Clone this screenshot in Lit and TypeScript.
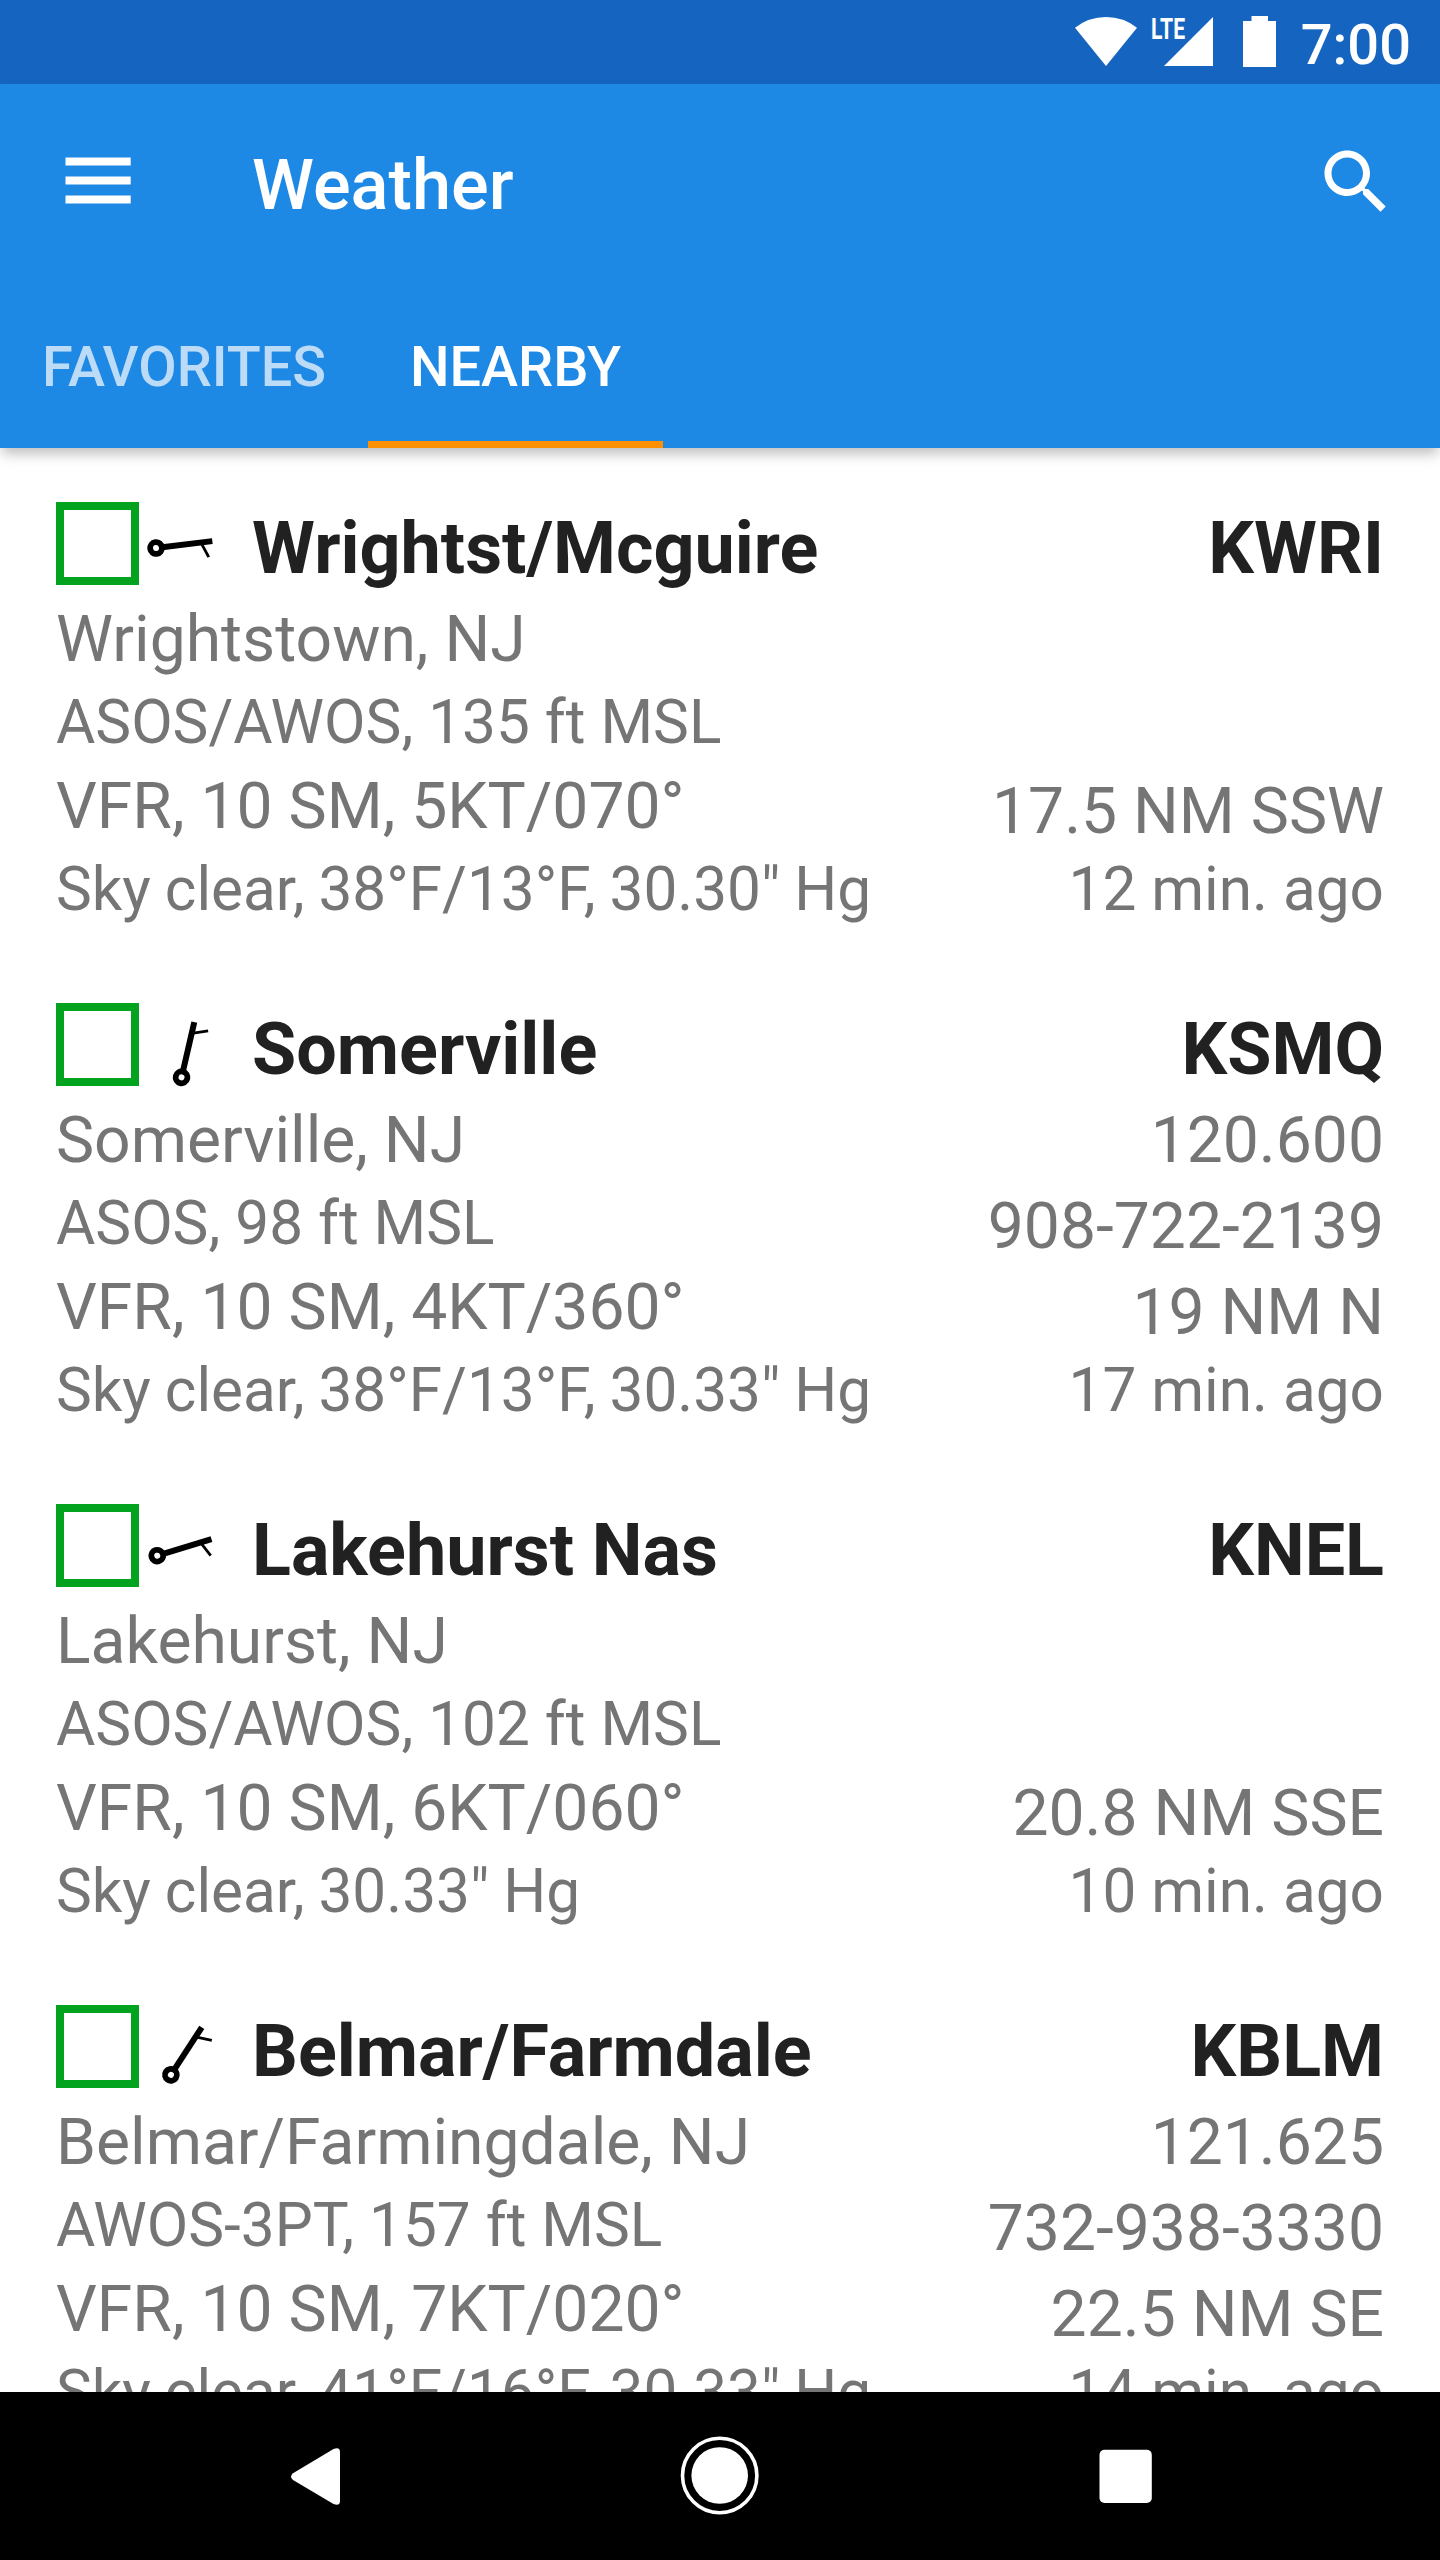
import { LitElement, html, css, svg, nothing } from "lit";
import { customElement, property } from "lit/decorators.js";

interface Station {
  name: string;
  id: string;
  wind: number;
  left: [string, string, string, string];
  freq: string;
  phone: string;
  distance: string;
  age: string;
}

const STATIONS: Station[] = [
  {
    name: "Wrightst/Mcguire",
    id: "KWRI",
    wind: 83,
    left: ["Wrightstown, NJ", "ASOS/AWOS, 135 ft MSL", "VFR, 10 SM, 5KT/070°", 'Sky clear, 38°F/13°F, 30.30" Hg'],
    freq: "",
    phone: "",
    distance: "17.5 NM SSW",
    age: "12 min. ago",
  },
  {
    name: "Somerville",
    id: "KSMQ",
    wind: 13,
    left: ["Somerville, NJ", "ASOS, 98 ft MSL", "VFR, 10 SM, 4KT/360°", 'Sky clear, 38°F/13°F, 30.33" Hg'],
    freq: "120.600",
    phone: "908-722-2139",
    distance: "19 NM N",
    age: "17 min. ago",
  },
  {
    name: "Lakehurst Nas",
    id: "KNEL",
    wind: 73,
    left: ["Lakehurst, NJ", "ASOS/AWOS, 102 ft MSL", "VFR, 10 SM, 6KT/060°", 'Sky clear, 30.33" Hg'],
    freq: "",
    phone: "",
    distance: "20.8 NM SSE",
    age: "10 min. ago",
  },
  {
    name: "Belmar/Farmdale",
    id: "KBLM",
    wind: 33,
    left: ["Belmar/Farmingdale, NJ", "AWOS-3PT, 157 ft MSL", "VFR, 10 SM, 7KT/020°", 'Sky clear, 41°F/16°F, 30.33" Hg'],
    freq: "121.625",
    phone: "732-938-3330",
    distance: "22.5 NM SE",
    age: "14 min. ago",
  },
];

@customElement("station-row")
class StationRow extends LitElement {
  @property({ attribute: false }) station!: Station;

  static styles = css`
    :host {
      display: block;
      height: 501px;
      flex: none;
      color: #757575;
      white-space: nowrap;
    }
    .head {
      display: flex;
      height: 92px;
      line-height: 94px;
      font-size: 71.9px;
      font-weight: 700;
      color: #212121;
    }
    .category {
      box-sizing: border-box;
      width: 83px;
      height: 83px;
      border: 8px solid #03a31f;
      flex: none;
    }
    .barb {
      width: 84px;
      height: 84px;
      margin: 0 21px 0 8px;
      flex: none;
      overflow: visible;
    }
    .name {
      flex: 1;
    }
    .body {
      display: flex;
      justify-content: space-between;
    }
    .col {
      display: flex;
      flex-direction: column;
    }
    .right {
      text-align: right;
    }
    .big {
      font-size: 64.2px;
      height: 90px;
      line-height: 90px;
    }
    .small {
      font-size: 60.3px;
      height: 77px;
      line-height: 77px;
    }
    .sky {
      word-spacing: -1px;
    }
    .phone {
      height: 82px;
      line-height: 82px;
    }
    .age {
      height: 67px;
      line-height: 67px;
    }
  `;

  render() {
    const s = this.station;
    const rows = ["big", "small", "big", "small sky"];
    return html`
      <div class="head">
        <div class="category"></div>
        <svg class="barb" viewBox="-42 -42 84 84">
          <g transform="rotate(${s.wind})" fill="none" stroke="#000">
            <circle cx="0" cy="33.2" r="5.9" stroke-width="5.8" />
            <path d="M0 27V-23.5" stroke-width="6" />
            <path d="M0 -12L15.5 -18" stroke-width="2.8" />
          </g>
        </svg>
        <div class="name">${s.name}</div>
        <div>${s.id}</div>
      </div>
      <div class="body">
        <div class="col">
          ${s.left.map((t, i) => html`<div class=${rows[i]}>${t}</div>`)}
        </div>
        <div class="col right">
          <div class="big">${s.freq || nothing}</div>
          <div class="big phone">${s.phone || nothing}</div>
          <div class="big">${s.distance}</div>
          <div class="small age">${s.age}</div>
        </div>
      </div>
    `;
  }
}

@customElement("app-root")
class AppRoot extends LitElement {
  static styles = css`
    :host {
      display: flex;
      flex-direction: column;
      width: 1440px;
      height: 2560px;
      overflow: hidden;
      background: #fff;
      font-family: Roboto, sans-serif;
    }
    .status {
      display: flex;
      justify-content: flex-end;
      height: 84px;
      flex: none;
      background: #1565c0;
      color: #fff;
      padding-right: 29px;
    }
    .status svg {
      width: 220px;
      height: 84px;
      flex: none;
    }
    .lte {
      font: 700 29.5px Roboto, sans-serif;
    }
    .time {
      width: 121px;
      text-align: right;
      font-size: 56px;
      font-weight: 500;
      line-height: 91px;
      white-space: nowrap;
    }
    .header {
      flex: none;
      height: 364px;
      display: flex;
      flex-direction: column;
      background: #1e88e5;
      color: #fff;
      box-shadow: 0 8px 12px -2px rgba(0, 0, 0, 0.25);
      z-index: 1;
    }
    .bar {
      display: flex;
      height: 196px;
      align-items: center;
      padding: 0 42px 0 56px;
    }
    .menu {
      width: 84px;
      height: 84px;
      margin-right: 112px;
    }
    .title {
      flex: 1;
      font-size: 70.4px;
      font-weight: 500;
      line-height: 84px;
      padding-top: 6px;
    }
    .search {
      width: 84px;
      height: 84px;
    }
    .tabs {
      display: flex;
      height: 168px;
    }
    .tab {
      box-sizing: border-box;
      height: 168px;
      padding: 0 42px;
      font-size: 55.8px;
      font-weight: 500;
      line-height: 175px;
      color: rgba(255, 255, 255, 0.7);
    }
    .first {
      width: 368px;
    }
    .active {
      width: 295px;
      color: #fff;
      border-bottom: 7px solid #ff9100;
    }
    .list {
      flex: 1;
      min-height: 0;
      overflow: hidden;
      display: flex;
      flex-direction: column;
      padding: 54px 56px 0;
    }
    .nav {
      flex: none;
      height: 168px;
      background: #000;
    }
    .nav svg {
      display: block;
      width: 1440px;
      height: 168px;
    }
  `;

  render() {
    return html`
      <div class="status">
        <svg viewBox="1070 0 220 84" fill="#fff">
          <path d="M1106 66L1075 27.8Q1088.5 17 1106 17T1137 27.8Z" />
          <path d="M1213 17V66H1164Z" />
          ${svg`<text class="lte" x="1151" y="39" textLength="34" lengthAdjust="spacingAndGlyphs">LTE</text>`}
          <path d="M1251.5 16H1268V21H1276V67H1243V21H1251.5Z" />
        </svg>
        <div class="time">7:00</div>
      </div>
      <div class="header">
        <div class="bar">
          <svg class="menu" viewBox="56 140 84 84" fill="#fff">
            <path d="M65.5 157.4h65.2v8h-65.2zM65.5 176.4h65.2v8h-65.2zM65.5 195.4h65.2v8h-65.2z" />
          </svg>
          <div class="title">Weather</div>
          <svg class="search" viewBox="0 0 24 24" fill="#fff">
            <path
              d="M15.5 14h-.79l-.28-.27C15.41 12.59 16 11.11 16 9.5 16 5.91 13.09 3 9.5 3S3 5.91 3 9.5 5.91 16 9.5 16c1.61 0 3.09-.59 4.23-1.57l.27.28v.79l5 4.99L20.49 19l-4.99-5zm-6 0C7.01 14 5 11.99 5 9.5S7.01 5 9.5 5 14 7.01 14 9.5 11.99 14 9.5 14z"
            />
          </svg>
        </div>
        <div class="tabs">
          <div class="tab first">FAVORITES</div>
          <div class="tab active">NEARBY</div>
        </div>
      </div>
      <div class="list">${STATIONS.map((s) => html`<station-row .station=${s}></station-row>`)}</div>
      <div class="nav">
        <svg viewBox="0 2392 1440 168" fill="#fff">
          <path d="M333.5 2449Q340 2446.5 340 2452V2501Q340 2506.5 333.5 2504L293 2480Q289 2476.6 293 2473.2Z" />
          <circle cx="719.7" cy="2475.5" r="37.2" fill="none" stroke="#fff" stroke-width="3.6" />
          <circle cx="719.7" cy="2475.5" r="28.3" />
          <rect x="1099.5" y="2449.7" width="52.3" height="53.3" rx="5" />
        </svg>
      </div>
    `;
  }
}
